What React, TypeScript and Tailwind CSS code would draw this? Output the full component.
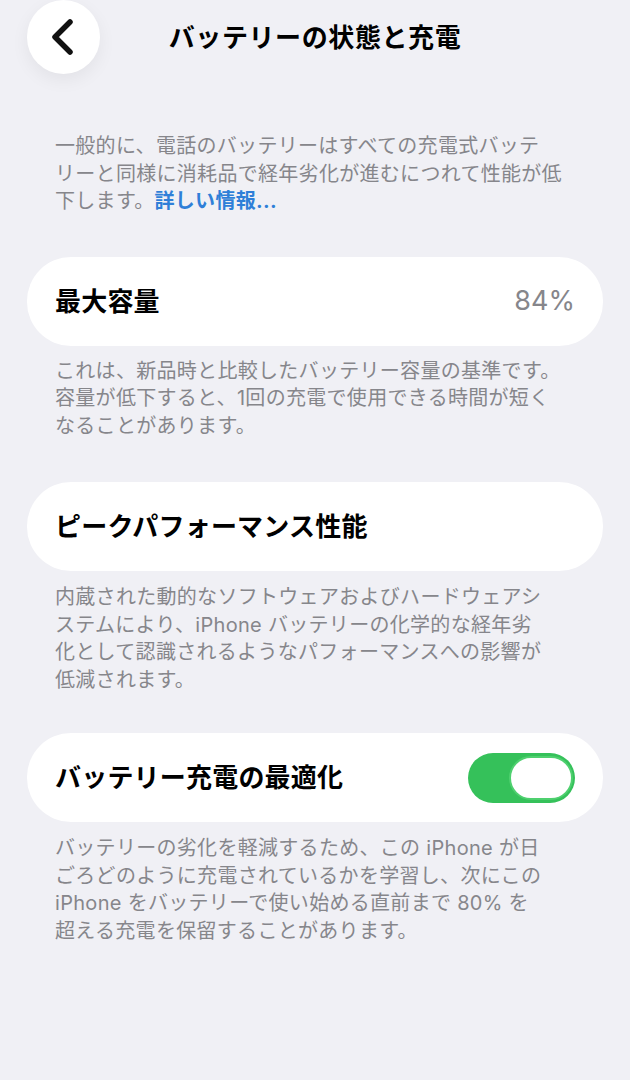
const FONT = "font-['Inter','Noto_Sans_CJK_JP',sans-serif]";

function BackButton() {
  return (
    <div className="w-[73px] h-[74px] rounded-full bg-white flex items-center justify-center shadow-[0_6px_18px_rgba(0,0,0,0.06)]">
      <svg width="24" height="36" viewBox="0 0 24 36" fill="none" className="-ml-[2px]">
        <path d="M19 3 L4 18 L19 33" stroke="#111" strokeWidth="5.5" strokeLinecap="round" strokeLinejoin="round" />
      </svg>
    </div>
  );
}

function Toggle() {
  return (
    <div className="w-[107px] h-[50px] rounded-full bg-[#35c15a] flex items-center justify-end pr-[2px]">
      <div className="w-[64px] h-[44px] rounded-full bg-white border-2 border-[#4fd06f]" />
    </div>
  );
}

function Card({ label, right }: { label: string; right?: React.ReactNode }) {
  return (
    <div className="mx-[27px] h-[89px] rounded-[44px] bg-white flex items-center justify-between pl-[28px] pr-[28px]">
      <span className="text-[26px] font-bold text-black tracking-[0.2px]">{label}</span>
      {right}
    </div>
  );
}

function Note({ lines, className = "" }: { lines: React.ReactNode[]; className?: string }) {
  return (
    <p className={`px-[55px] text-[20px] leading-[27.5px] tracking-[0.3px] text-[#86868b] ${className}`}>
      {lines.map((l, i) => (
        <span key={i} className="block whitespace-nowrap">{l}</span>
      ))}
    </p>
  );
}

export default function App() {
  return (
    <div className={`${FONT} w-[630px] min-h-[1080px] bg-[#f0f0f5] flex flex-col`}>

      {/* ── Header ─────────────────────────────────────────── */}
      <div className="relative h-[74px] flex items-center justify-center">
        <div className="absolute left-[27px] top-0">
          <BackButton />
        </div>
        <h1 className="text-[26px] font-bold text-black tracking-[0.6px]">バッテリーの状態と充電</h1>
      </div>

      {/* ── Intro ──────────────────────────────────────────── */}
      <Note
        className="mt-[59px]"
        lines={[
          "一般的に、電話のバッテリーはすべての充電式バッテ",
          "リーと同様に消耗品で経年劣化が進むにつれて性能が低",
          <>下します。<span className="text-[#2f7fd8] font-bold">詳しい情報...</span></>,
        ]}
      />

      {/* ── Max capacity ───────────────────────────────────── */}
      <div className="mt-[41px]">
        <Card label="最大容量" right={<span className="text-[27px] text-[#86868b]">84%</span>} />
      </div>
      <Note
        className="mt-[12px]"
        lines={[
          "これは、新品時と比較したバッテリー容量の基準です。",
          "容量が低下すると、1回の充電で使用できる時間が短く",
          "なることがあります。",
        ]}
      />

      {/* ── Peak performance ───────────────────────────────── */}
      <div className="mt-[42px]">
        <Card label="ピークパフォーマンス性能" />
      </div>
      <Note
        className="mt-[13px]"
        lines={[
          "内蔵された動的なソフトウェアおよびハードウェアシ",
          "ステムにより、iPhone バッテリーの化学的な経年劣",
          "化として認識されるようなパフォーマンスへの影響が",
          "低減されます。",
        ]}
      />

      {/* ── Optimized charging ─────────────────────────────── */}
      <div className="mt-[39px]">
        <Card label="バッテリー充電の最適化" right={<Toggle />} />
      </div>
      <Note
        className="mt-[13px]"
        lines={[
          "バッテリーの劣化を軽減するため、この iPhone が日",
          "ごろどのように充電されているかを学習し、次にこの",
          "iPhone をバッテリーで使い始める直前まで 80% を",
          "超える充電を保留することがあります。",
        ]}
      />
    </div>
  );
}
